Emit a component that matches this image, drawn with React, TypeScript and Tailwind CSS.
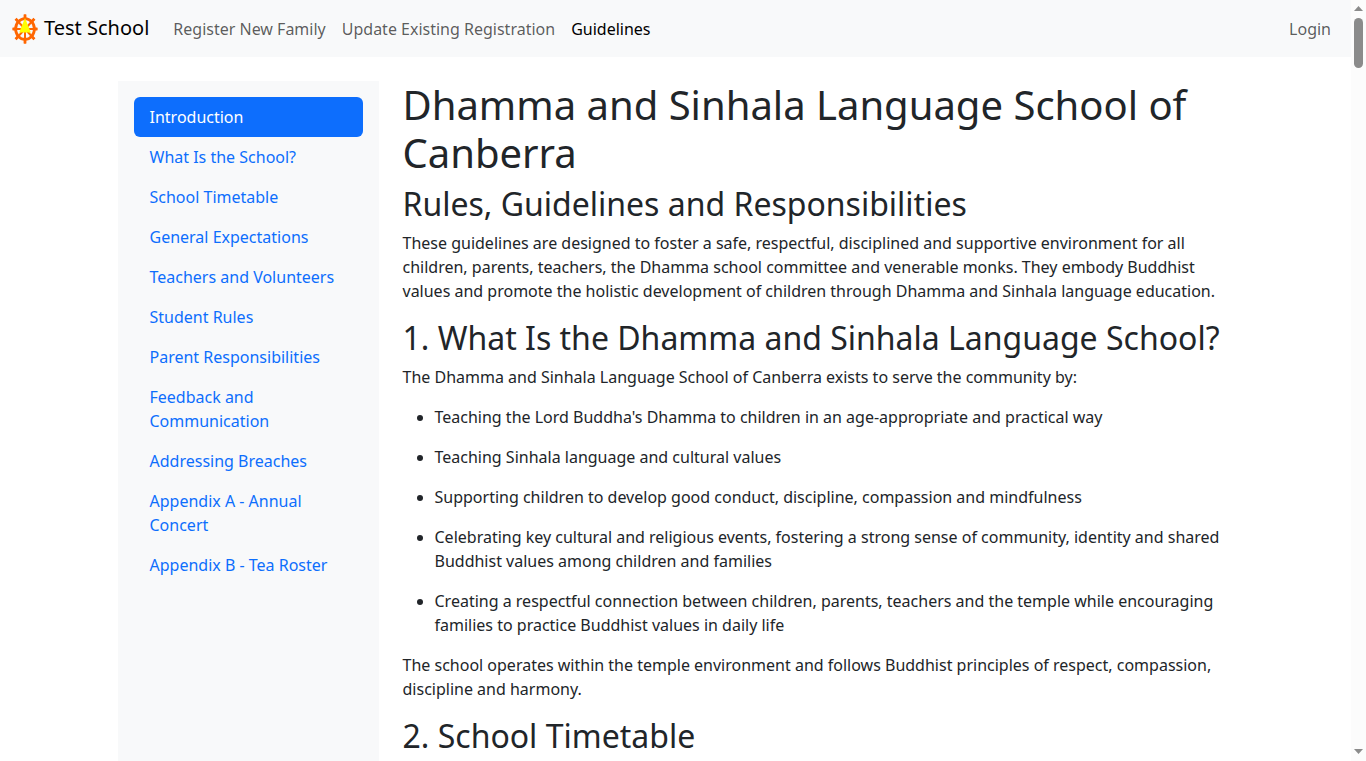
import type { ReactNode } from "react";

const navLinks = [
  { label: "Register New Family" },
  { label: "Update Existing Registration" },
  { label: "Guidelines", active: true }
];

const sections = [
  "Introduction",
  "What Is the School?",
  "School Timetable",
  "General Expectations",
  "Teachers and Volunteers",
  "Student Rules",
  "Parent Responsibilities",
  "Feedback and Communication",
  "Addressing Breaches",
  "Appendix A - Annual Concert",
  "Appendix B - Tea Roster"
];

const purposes = [
  "Teaching the Lord Buddha's Dhamma to children in an age-appropriate and practical way",
  "Teaching Sinhala language and cultural values",
  "Supporting children to develop good conduct, discipline, compassion and mindfulness",
  "Celebrating key cultural and religious events, fostering a strong sense of community, identity and shared Buddhist values among children and families",
  "Creating a respectful connection between children, parents, teachers and the temple while encouraging families to practice Buddhist values in daily life"
];

function WheelLogo() {
  return (
    <svg className="h-[30px] w-[26px]" viewBox="0 0 26 30" aria-hidden="true">
      <g stroke="#ff6600" fill="none">
        <ellipse cx="13" cy="15" rx="9.4" ry="10.4" strokeWidth="2.8" />
        <path d="M13 .6V29.4M.6 15H25.4M3.8 5L22.2 25M22.2 5L3.8 25" strokeWidth="2" />
        <path
          d="M13 .6V4M13 26V29.4M.6 15H3M23 15H25.4M3.6 4.8L6 7.4M22.4 4.8L20 7.4M3.6 25.2L6 22.6M22.4 25.2L20 22.6"
          strokeWidth="2.8"
        />
      </g>
      <path d="M13 4L18.8 18.6H7.2Z" fill="#ffff00" />
    </svg>
  );
}

function Navbar() {
  return (
    <nav className="flex items-center bg-[#f8f9fa] px-3 pt-[9px] pb-2">
      <a href="#" className="mr-4 flex items-center gap-[6px] text-xl leading-[30px] text-black">
        <WheelLogo />
        <span className="pb-[2px]">Test School</span>
      </a>
      <ul className="flex flex-1">
        {navLinks.map((link) => (
          <li key={link.label}>
            <a
              href="#"
              className={`block p-2 ${link.active ? "text-black" : "text-black/65"}`}
            >
              {link.label}
            </a>
          </li>
        ))}
      </ul>
      <a href="#" className="block p-2 text-black/65">
        Login
      </a>
    </nav>
  );
}

function Sidebar() {
  return (
    <aside className="w-1/4 shrink-0 px-3">
      <nav className="flex h-full flex-col bg-[#f8f9fa] p-4">
        {sections.map((section, index) => (
          <a
            key={section}
            href="#"
            className={`rounded-md px-4 py-2 ${index === 0 ? "bg-[#0d6efd] text-white" : "text-[#0d6efd]"}`}
          >
            {section}
          </a>
        ))}
      </nav>
    </aside>
  );
}

function SectionHeading({ children }: { children: ReactNode }) {
  return <h2 className="mb-2 text-[32px] leading-[38px]">{children}</h2>;
}

function Guidelines() {
  return (
    <main className="w-3/4 px-3">
      <h1 className="mb-2 text-[40px] leading-[48px]">
        Dhamma and Sinhala Language School of Canberra
      </h1>
      <SectionHeading>Rules, Guidelines and Responsibilities</SectionHeading>
      <p className="mb-4">
        These guidelines are designed to foster a safe, respectful, disciplined and supportive
        environment for all children, parents, teachers, the Dhamma school committee and venerable
        monks. They embody Buddhist values and promote the holistic development of children through
        Dhamma and Sinhala language education.
      </p>
      <SectionHeading>1. What Is the Dhamma and Sinhala Language School?</SectionHeading>
      <p className="mb-4">
        The Dhamma and Sinhala Language School of Canberra exists to serve the community by:
      </p>
      <ul className="mb-4 list-disc space-y-4 pl-8">
        {purposes.map((purpose) => (
          <li key={purpose}>{purpose}</li>
        ))}
      </ul>
      <p className="mb-4">
        The school operates within the temple environment and follows Buddhist principles of
        respect, compassion, discipline and harmony.
      </p>
      <SectionHeading>2. School Timetable</SectionHeading>
    </main>
  );
}

function ScrollTrack() {
  return (
    <div
      className="flex w-[15px] shrink-0 flex-col items-center bg-[#fcfcfc] pt-[6px] pb-[7px]"
      aria-hidden="true"
    >
      <svg className="h-[5px] w-[9px]" viewBox="0 0 9 5">
        <path d="M4.5 0L9 5H0Z" fill="#8b8b8b" />
      </svg>
      <div className="mt-[7px] h-[50px] w-[9px] rounded-full bg-[#8b8b8b]" />
      <svg className="mt-auto h-[5px] w-[9px]" viewBox="0 0 9 5">
        <path d="M0 0H9L4.5 5Z" fill="#8b8b8b" />
      </svg>
    </div>
  );
}

export default function App() {
  return (
    <div className="flex h-screen overflow-hidden bg-white font-['Noto_Sans',sans-serif] text-base text-[#212529]">
      <div className="flex min-w-0 flex-1 flex-col">
        <Navbar />
        <div className="mx-auto mt-6 flex w-full max-w-[1140px] flex-1">
          <Sidebar />
          <Guidelines />
        </div>
      </div>
      <ScrollTrack />
    </div>
  );
}
